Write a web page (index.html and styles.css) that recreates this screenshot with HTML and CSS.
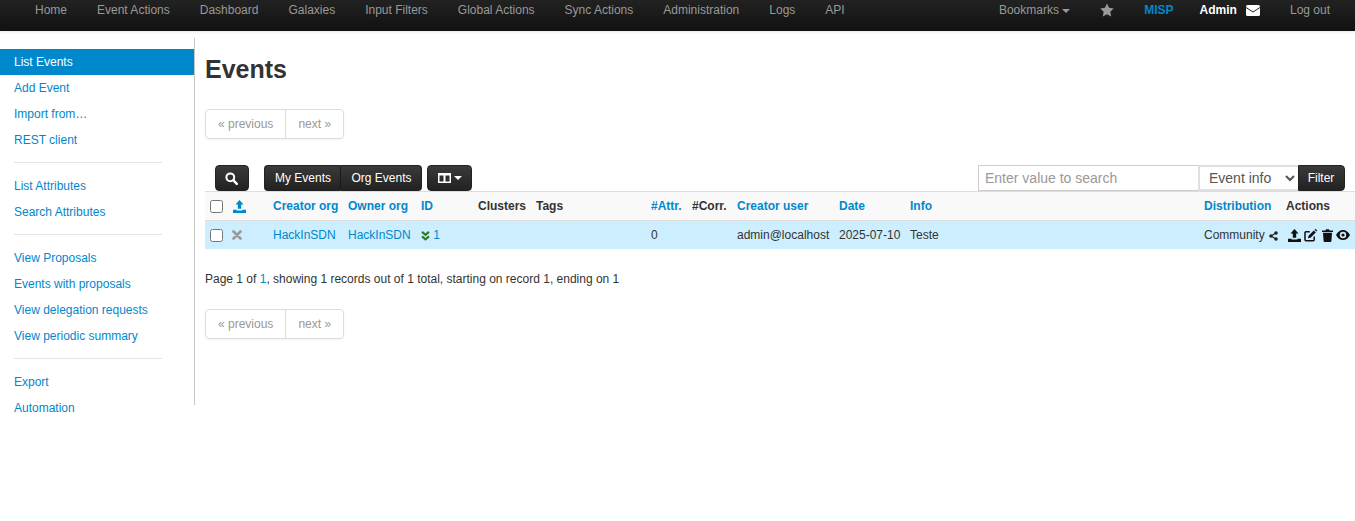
FILE: index.html
```html
<!DOCTYPE HTML>
<html>
<head>
  <meta charset="UTF-8">
  <title>Events</title>
  <link rel="stylesheet" href="styles.css">
</head>
<body>
  <div class="navbar">
    <div class="nav-left">
      <a href="#">Home</a>
      <a href="#">Event Actions</a>
      <a href="#">Dashboard</a>
      <a href="#">Galaxies</a>
      <a href="#">Input Filters</a>
      <a href="#">Global Actions</a>
      <a href="#">Sync Actions</a>
      <a href="#">Administration</a>
      <a href="#">Logs</a>
      <a href="#">API</a>
    </div>
    <div class="nav-right">
      <a href="#" class="bookmarks">Bookmarks <span class="caret"></span></a>
      <a href="#" class="star">
        <svg width="14" height="14" viewBox="0 0 24 24"><path fill="#999" d="M12 .8l3.5 7.4 8 1.1-5.8 5.6 1.4 8.1-7.1-3.9-7.1 3.9 1.4-8.1L.5 9.300l8-1.100z"/></svg>
      </a>
      <span class="org">MISP</span>
      <span class="user">Admin</span>
      <a href="#" class="mail">
        <svg width="14" height="11" viewBox="0 0 14 11"><rect width="14" height="11" rx="1.500" fill="#fff"/><path d="M0 2.500l7 4.500 7-4.500" fill="none" stroke="#222" stroke-width="1"/></svg>
      </a>
      <a href="#" class="logout">Log out</a>
    </div>
  </div>

  <div class="page">
    <div class="side">
      <ul>
        <li class="active"><a href="#">List Events</a></li>
        <li><a href="#">Add Event</a></li>
        <li><a href="#">Import from…</a></li>
        <li><a href="#">REST client</a></li>
        <li class="divider"></li>
        <li><a href="#">List Attributes</a></li>
        <li><a href="#">Search Attributes</a></li>
        <li class="divider"></li>
        <li><a href="#">View Proposals</a></li>
        <li><a href="#">Events with proposals</a></li>
        <li><a href="#">View delegation requests</a></li>
        <li><a href="#">View periodic summary</a></li>
        <li class="divider"></li>
        <li><a href="#">Export</a></li>
        <li><a href="#">Automation</a></li>
      </ul>
    </div>

    <div class="main">
      <h2>Events</h2>
      <div class="pagination top">
        <span>« previous</span><span>next »</span>
      </div>

      <div class="toolbar">
        <div class="tools">
          <button class="btn search-btn">
            <svg width="13" height="13" viewBox="0 0 13 13"><circle cx="5.300" cy="5.300" r="3.900" fill="none" stroke="#fff" stroke-width="2"/><path d="M8.200 8.200l3.600 3.600" stroke="#fff" stroke-width="2.400" stroke-linecap="round"/></svg>
          </button>
          <div class="btn-group">
            <button class="btn">My Events</button><button class="btn">Org Events</button>
          </div>
          <button class="btn columns-btn">
            <svg width="13" height="10" viewBox="0 0 13 10"><path fill="#fff" fill-rule="evenodd" d="M0 0h13v10H0zM1.500 2.500v6h4v-6zM7.500 2.500v6h4v-6z"/></svg>
            <span class="caret white"></span>
          </button>
        </div>
        <div class="filter">
          <input type="text" placeholder="Enter value to search">
          <select><option>Event info</option></select>
          <button class="btn filter-btn">Filter</button>
        </div>
      </div>

      <table class="events">
        <colgroup>
          <col class="c-check"><col class="c-pub"><col class="c-creator"><col class="c-owner">
          <col class="c-id"><col class="c-clusters"><col class="c-tags"><col class="c-attr">
          <col class="c-corr"><col class="c-user"><col class="c-date"><col class="c-info">
          <col class="c-dist"><col class="c-actions">
        </colgroup>
        <thead>
          <tr>
            <th><input type="checkbox"></th>
            <th>
              <svg class="up" width="13" height="13" viewBox="0 0 13 13"><path fill="#0088cc" d="M6.500 0l4 4.500H8.200v4.300H4.800V4.500H2.500zM0 9.800h3.600v.8h5.800v-.8H13V13H0z"/></svg>
            </th>
            <th><a href="#">Creator org</a></th>
            <th><a href="#">Owner org</a></th>
            <th><a href="#">ID</a></th>
            <th>Clusters</th>
            <th>Tags</th>
            <th><a href="#">#Attr.</a></th>
            <th>#Corr.</th>
            <th><a href="#">Creator user</a></th>
            <th><a href="#">Date</a></th>
            <th><a href="#">Info</a></th>
            <th><a href="#">Distribution</a></th>
            <th>Actions</th>
          </tr>
        </thead>
        <tbody>
          <tr>
            <td><input type="checkbox"></td>
            <td>
              <svg class="cross" width="10" height="10" viewBox="0 0 10 10"><path d="M1.500 1.500l7 7M8.500 1.500l-7 7" stroke="#999" stroke-width="2.600" stroke-linecap="round"/></svg>
            </td>
            <td><a href="#">HackInSDN</a></td>
            <td><a href="#">HackInSDN</a></td>
            <td>
              <svg class="chev" width="9" height="10" viewBox="0 0 9 10"><path d="M1 .8l3.500 3L8 .8M1 5.300l3.500 3 3.500-3" fill="none" stroke="#2e7d22" stroke-width="2.200"/></svg>
              <a href="#">1</a>
            </td>
            <td></td>
            <td></td>
            <td>0</td>
            <td></td>
            <td>admin@localhost</td>
            <td>2025-07-10</td>
            <td>Teste</td>
            <td>
              Community
              <svg class="share" width="9" height="10" viewBox="0 0 9 10"><path d="M7 2L2 5l5 3" fill="none" stroke="#222" stroke-width="1.200"/><circle cx="7" cy="2" r="1.800" fill="#222"/><circle cx="2" cy="5" r="1.800" fill="#222"/><circle cx="7" cy="8" r="1.800" fill="#222"/></svg>
            </td>
            <td class="actions">
              <svg class="a-up" width="13" height="13" viewBox="0 0 13 13"><path fill="#111" d="M6.500 0l4 4.500H8.200v4.300H4.800V4.500H2.500zM0 9.800h3.600v.8h5.800v-.8H13V13H0z"/></svg>
              <svg class="a-edit" width="13" height="13" viewBox="0 0 13 13"><path fill="none" stroke="#111" stroke-width="1.500" d="M10.200 7.500v3.200a1 1 0 0 1-1 1H2a1 1 0 0 1-1-1V3.800a1 1 0 0 1 1-1h3.800"/><path fill="#111" d="M4.500 6.800L9.800 1.500l2 2-5.300 5.300-2.500.5zM10.500.8l.7-.6a.6.6 0 0 1 .8 0l.9.9a.6.6 0 0 1 0 .8l-.6.7z"/></svg>
              <svg class="a-trash" width="11" height="13" viewBox="0 0 11 13"><path fill="#111" d="M0 1.500h3.500L4 .3h3l.5 1.200H11V3H0zM1 3.800h9l-.6 8.300a.9.9 0 0 1-.9.900h-6a.9.9 0 0 1-.9-.9z"/></svg>
              <svg class="a-eye" width="14" height="10" viewBox="0 0 14 10"><path fill="#111" fill-rule="evenodd" d="M7 0c3 0 5.500 2 7 5-1.500 3-4 5-7 5S1.500 8 0 5c1.500-3 4-5 7-5zm0 1.800a3.200 3.200 0 1 0 0 6.400 3.200 3.200 0 0 0 0-6.400zM7 3.400a1.600 1.600 0 1 1 0 3.200 1.600 1.600 0 0 1 0-3.200z"/></svg>
            </td>
          </tr>
        </tbody>
      </table>

      <p class="counter">Page 1 of <a href="#">1</a>, showing 1 records out of 1 total, starting on record 1, ending on 1</p>

      <div class="pagination">
        <span>« previous</span><span>next »</span>
      </div>
    </div>
  </div>
</body>
</html>
```

FILE: styles.css
```css
body
{
  margin: 0;
  font-family: "Liberation Sans", Arial, sans-serif;
  font-size: 12px;
  line-height: 20px;
  color: #333333;
  background-color: #ffffff;
}
a
{
  color: #0088cc;
  text-decoration: none;
}
.navbar
{
  display: flex;
  justify-content: space-between;
  height: 31px;
  padding: 0 25px 0 20px;
  background: linear-gradient(to bottom, #222222, #111111);
  box-shadow: 0 1px 3px rgba(0, 0, 0, 0.1);
}
.nav-left, .nav-right
{
  display: flex;
  height: 20px;
}
.navbar a
{
  color: #999999;
}
.nav-left a
{
  padding: 0 15px;
}
.bookmarks
{
  margin-right: 30px;
}
.star
{
  display: flex;
  align-items: center;
  margin-right: 30px;
}
.org
{
  margin-right: 26px;
  font-weight: bold;
  color: #0088cc;
}
.user
{
  font-weight: bold;
  color: #ffffff;
}
.mail
{
  display: flex;
  align-items: center;
  margin-left: 9px;
  margin-right: 30px;
}
.caret
{
  display: inline-block;
  vertical-align: middle;
  border-top: 4px solid #999999;
  border-left: 4px solid transparent;
  border-right: 4px solid transparent;
}
.caret.white
{
  border-top-color: #ffffff;
}
.page
{
  display: flex;
  margin-top: 7px;
}
.side
{
  flex: none;
  width: 195px;
  background: linear-gradient(#c4c4c4, #c4c4c4) right top / 1px 367px no-repeat;
}
.side ul
{
  margin: 0;
  padding: 11px 0 0;
  list-style: none;
}
.side li a
{
  display: block;
  margin-right: 1px;
  padding: 3px 14px;
}
.side li.active a
{
  background-color: #0088cc;
  color: #ffffff;
}
.side .divider
{
  height: 1px;
  margin: 9px 14px 10px;
  width: 148px;
  background-color: #e5e5e5;
}
.main
{
  flex: 1;
  min-width: 0;
  padding-left: 10px;
}
h2
{
  margin: 15px 0 0;
  font-size: 25px;
  line-height: 32px;
  color: #333333;
}
.pagination
{
  display: inline-flex;
  vertical-align: top;
  border: 1px solid #dddddd;
  border-radius: 4px;
  box-shadow: 0 1px 2px rgba(0, 0, 0, 0.05);
  color: #999999;
}
.pagination.top
{
  display: flex;
  width: fit-content;
  margin-top: 24px;
}
.pagination span
{
  padding: 4px 12px;
}
.pagination span + span
{
  border-left: 1px solid #dddddd;
}
.toolbar
{
  display: flex;
  justify-content: space-between;
  margin-top: 26px;
  padding: 0 10px;
}
.tools, .filter
{
  display: flex;
}
.btn
{
  height: 26px;
  padding: 0 11px;
  font-family: inherit;
  font-size: 12px;
  color: #ffffff;
  background: linear-gradient(to bottom, #3a3a3a, #222222);
  border: 1px solid #222222;
  border-radius: 4px;
}
.search-btn
{
  width: 34px;
  padding: 0 2px 0 0;
  margin-right: 15px;
}
.search-btn svg
{
  display: block;
  margin: 1px auto 0;
}
.btn-group
{
  display: flex;
  margin-right: 5px;
}
.btn-group .btn:first-child
{
  width: 76px;
  padding: 0 0 0 1px;
  border-right: none;
  border-radius: 4px 0 0 4px;
}
.btn-group .btn:last-child
{
  width: 82px;
  padding: 0 0 0 1px;
  border-radius: 0 4px 4px 0;
  border-left-color: #1a1a1a;
}
.columns-btn
{
  display: flex;
  align-items: center;
  gap: 3px;
  width: 45px;
  padding: 0 0 0 10px;
}
.filter input
{
  box-sizing: border-box;
  width: 220px;
  height: 26px;
  padding: 0 6px;
  font-family: inherit;
  font-size: 14px;
  border: 1px solid #cccccc;
  border-right: none;
  outline: none;
}
.filter input::placeholder
{
  color: #999999;
}
.filter select
{
  box-sizing: border-box;
  width: 100px;
  height: 26px;
  padding: 0 5px;
  font-family: inherit;
  font-size: 14px;
  color: #555555;
  background-color: #ffffff;
  border: 2px solid #e0e0e0;
  border-right: none;
  border-radius: 0;
}
.filter-btn
{
  width: 47px;
  padding: 0 1px 0 0;
  border-radius: 0 4px 4px 0;
}
.events
{
  width: 100%;
  table-layout: fixed;
  border-collapse: collapse;
}
.events th, .events td
{
  padding: 0 5px;
  text-align: left;
  white-space: nowrap;
  overflow: visible;
}
.events th
{
  height: 28px;
  font-weight: bold;
  background-color: #f9f9f9;
  border-top: 1px solid #dddddd;
  border-bottom: 1px solid #dddddd;
}
.events td
{
  height: 28px;
  background-color: #cdeefe;
}
.events input[type="checkbox"]
{
  display: block;
  width: 13px;
  height: 13px;
  margin: 0;
}
.events svg
{
  vertical-align: middle;
}
.c-check { width: 23px; }
.c-pub { width: 40px; }
.c-creator { width: 75px; }
.c-owner { width: 73px; }
.c-id { width: 57px; }
.c-clusters { width: 58px; }
.c-tags { width: 115px; }
.c-attr { width: 41px; }
.c-corr { width: 45px; }
.c-user { width: 102px; }
.c-date { width: 71px; }
.c-info { width: 294px; }
.c-dist { width: 82px; }
.c-actions { width: 74px; }
.cross
{
  margin-left: -1px;
  margin-bottom: 2px;
}
.share
{
  margin-left: 1px;
}
.actions
{
  font-size: 0;
}
.a-up
{
  margin-left: 2px;
  margin-right: 3px;
}
.a-edit
{
  margin-right: 5px;
}
.a-trash
{
  margin-right: 3px;
}
.counter
{
  margin: 20px 0 20px;
}
```
